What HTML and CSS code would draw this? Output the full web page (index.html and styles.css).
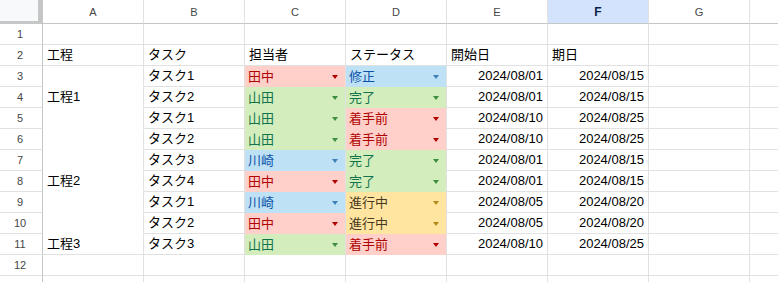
FILE: index.html
```html
<!DOCTYPE html>
<html lang="ja">
<head>
<meta charset="utf-8">
<title>Sheet</title>
<link rel="stylesheet" href="styles.css">
</head>
<body>
<div class="sheet">
  <div class="corner"></div>
  <div class="ch">A</div><div class="ch">B</div><div class="ch">C</div><div class="ch">D</div><div class="ch">E</div><div class="ch sel">F</div><div class="ch">G</div><div class="ch end"></div>

  <div class="rh">1</div><div class="c"></div><div class="c"></div><div class="c"></div><div class="c"></div><div class="c"></div><div class="c"></div><div class="c"></div><div class="c end"></div>

  <div class="rh">2</div><div class="c">工程</div><div class="c">タスク</div><div class="c">担当者</div><div class="c">ステータス</div><div class="c">開始日</div><div class="c">期日</div><div class="c"></div><div class="c end"></div>

  <div class="rh">3</div><div class="c nb"></div><div class="c">タスク1</div>
  <div class="c dd red">田中<i class="ar"></i></div><div class="c dd blue">修正<i class="ar"></i></div>
  <div class="c num">2024/08/01</div><div class="c num">2024/08/15</div><div class="c"></div><div class="c end"></div>

  <div class="rh">4</div><div class="c nb">工程1</div><div class="c">タスク2</div>
  <div class="c dd green">山田<i class="ar"></i></div><div class="c dd green">完了<i class="ar"></i></div>
  <div class="c num">2024/08/01</div><div class="c num">2024/08/15</div><div class="c"></div><div class="c end"></div>

  <div class="rh">5</div><div class="c nb"></div><div class="c">タスク1</div>
  <div class="c dd green">山田<i class="ar"></i></div><div class="c dd red">着手前<i class="ar"></i></div>
  <div class="c num">2024/08/10</div><div class="c num">2024/08/25</div><div class="c"></div><div class="c end"></div>

  <div class="rh">6</div><div class="c nb"></div><div class="c">タスク2</div>
  <div class="c dd green">山田<i class="ar"></i></div><div class="c dd red">着手前<i class="ar"></i></div>
  <div class="c num">2024/08/10</div><div class="c num">2024/08/25</div><div class="c"></div><div class="c end"></div>

  <div class="rh">7</div><div class="c nb"></div><div class="c">タスク3</div>
  <div class="c dd blue">川崎<i class="ar"></i></div><div class="c dd green">完了<i class="ar"></i></div>
  <div class="c num">2024/08/01</div><div class="c num">2024/08/15</div><div class="c"></div><div class="c end"></div>

  <div class="rh">8</div><div class="c nb">工程2</div><div class="c">タスク4</div>
  <div class="c dd red">田中<i class="ar"></i></div><div class="c dd green">完了<i class="ar"></i></div>
  <div class="c num">2024/08/01</div><div class="c num">2024/08/15</div><div class="c"></div><div class="c end"></div>

  <div class="rh">9</div><div class="c nb"></div><div class="c">タスク1</div>
  <div class="c dd blue">川崎<i class="ar"></i></div><div class="c dd yellow">進行中<i class="ar"></i></div>
  <div class="c num">2024/08/05</div><div class="c num">2024/08/20</div><div class="c"></div><div class="c end"></div>

  <div class="rh">10</div><div class="c nb"></div><div class="c">タスク2</div>
  <div class="c dd red">田中<i class="ar"></i></div><div class="c dd yellow">進行中<i class="ar"></i></div>
  <div class="c num">2024/08/05</div><div class="c num">2024/08/20</div><div class="c"></div><div class="c end"></div>

  <div class="rh">11</div><div class="c">工程3</div><div class="c">タスク3</div>
  <div class="c dd green">山田<i class="ar"></i></div><div class="c dd red">着手前<i class="ar"></i></div>
  <div class="c num">2024/08/10</div><div class="c num">2024/08/25</div><div class="c"></div><div class="c end"></div>

  <div class="rh">12</div><div class="c"></div><div class="c"></div><div class="c"></div><div class="c"></div><div class="c"></div><div class="c"></div><div class="c"></div><div class="c end"></div>

  <div class="rh">13</div><div class="c"></div><div class="c"></div><div class="c"></div><div class="c"></div><div class="c"></div><div class="c"></div><div class="c"></div><div class="c end"></div>
</div>
</body>
</html>
```

FILE: styles.css
```css
* { box-sizing: border-box; }
html, body { margin: 0; padding: 0; background: #fff; overflow: hidden; }
body { width: 778px; height: 282px; }

.sheet {
  display: grid;
  grid-template-columns: 43px repeat(7, 101px) 1fr;
  grid-template-rows: 24px repeat(13, 21px);
  font-family: "Liberation Sans", Arial, "Noto Sans CJK JP", sans-serif;
  font-size: 13px;
  color: #000;
}

.corner {
  background: #f8f9fa;
  border-right: 1px solid #c4c7c5;
  border-bottom: 1px solid #c4c7c5;
  box-shadow: inset -6px -4px 0 -2px #c4c7c5, inset -3px -1px 0 0 #fff;
}

.ch {
  display: flex;
  align-items: center;
  justify-content: center;
  font-family: "Liberation Sans", Arial, sans-serif;
  font-size: 11px;
  color: #444746;
  background: #fff;
  border-right: 1px solid #e1e1e1;
  border-bottom: 1px solid #c4c7c5;
  padding-top: 1px;
}
.ch.sel {
  background: #d3e3fd;
  color: #0b1f44;
  font-weight: bold;
  font-size: 12px;
}
.ch.end { border-right: none; }

.rh {
  display: flex;
  align-items: center;
  justify-content: center;
  font-family: "Liberation Sans", Arial, sans-serif;
  font-size: 11px;
  color: #444746;
  border-right: 1px solid #c4c7c5;
  border-bottom: 1px solid #e1e1e1;
  padding-right: 2px;
}

.c {
  display: flex;
  align-items: flex-end;
  padding: 0 3px 2px 4px;
  border-right: 1px solid #e1e1e1;
  border-bottom: 1px solid #e1e1e1;
  white-space: nowrap;
  overflow: hidden;
  line-height: 17px;
}
.c.end { border-right: none; }
.c.nb { border-bottom-color: #fff; }
.c.num { justify-content: flex-end; padding-right: 4px; }

.dd { align-items: center; padding: 1px 0 0 3px; }
.ar {
  margin-left: auto;
  margin-right: 7px;
  width: 0;
  height: 0;
  border-left: 3.5px solid transparent;
  border-right: 3.5px solid transparent;
  border-top: 4px solid currentColor;
}

.red { background: #ffcfc9; color: #b10202; border-bottom-color: #ffcfc9; }
.green { background: #d4edbc; color: #11734b; border-bottom-color: #d4edbc; }
.blue { background: #bfe1f6; color: #0a53a8; border-bottom-color: #bfe1f6; }
.yellow { background: #ffe5a0; color: #473821; border-bottom-color: #ffe5a0; }
.red .ar { color: #b10202; }
.green .ar { color: #3e8e41; }
.blue .ar { color: #3f7fb8; }
.yellow .ar { color: #b38a1c; }
```
